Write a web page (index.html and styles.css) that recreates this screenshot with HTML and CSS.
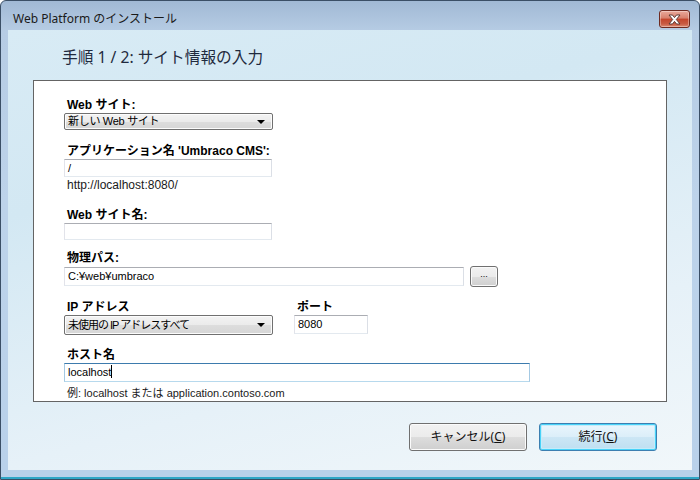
FILE: index.html
```html
<!DOCTYPE html>
<html lang="ja">
<head>
<meta charset="utf-8">
<title>Web Platform のインストール</title>
<link rel="stylesheet" href="styles.css">
</head>
<body>
<div class="window">
  <div class="titlebar">
    <span class="title">Web Platform のインストール</span>
    <div class="close">
      <svg width="15" height="11" viewBox="0 0 15 11">
        <path d="M2 1 L5.5 1 L7.5 3.6 L9.5 1 L13 1 L9.3 5.5 L13 10 L9.5 10 L7.5 7.4 L5.5 10 L2 10 L5.7 5.5 Z" fill="#ffffff" stroke="#5a3a36" stroke-width="1" stroke-linejoin="round"/>
      </svg>
    </div>
  </div>
  <div class="client">
    <h1 class="heading">手順 1 / 2: サイト情報の入力</h1>
    <div class="panel">
      <div class="label l1">Web サイト:</div>
      <div class="select sel-site"><span>新しい Web サイト</span><i class="arrow"></i></div>

      <div class="label l2">アプリケーション名 'Umbraco CMS':</div>
      <div class="input in-short">/</div>
      <div class="hint h1">http://localhost:8080/</div>

      <div class="label l3">Web サイト名:</div>
      <div class="input in-short"></div>

      <div class="label l4">物理パス:</div>
      <div class="row path-row">
        <div class="input in-path">C:¥web¥umbraco</div>
        <div class="browse">...</div>
      </div>

      <div class="row ip-row">
        <div class="col">
          <div class="label l5">IP アドレス</div>
          <div class="select sel-ip"><span>未使用の IP アドレスすべて</span><i class="arrow"></i></div>
        </div>
        <div class="col port-col">
          <div class="label l5">ポート</div>
          <div class="input in-port">8080</div>
        </div>
      </div>

      <div class="label l6">ホスト名</div>
      <div class="input in-host focus">localhost<span class="caret"></span></div>
      <div class="hint h2">例: localhost または application.contoso.com</div>
    </div>
    <div class="buttons">
      <div class="btn">キャンセル(<u>C</u>)</div>
      <div class="btn default">続行(<u>C</u>)</div>
    </div>
  </div>
</div>
</body>
</html>
```

FILE: styles.css
```css
* { box-sizing: border-box; }
html, body { margin: 0; padding: 0; }
body {
  width: 700px;
  height: 480px;
  overflow: hidden;
  background: #ffffff;
  font-family: "Liberation Sans", "Noto Sans CJK JP", sans-serif;
  font-size: 12px;
  color: #000;
}
.window {
  width: 700px;
  height: 480px;
  border: 1px solid #3b4f66;
  border-radius: 6px 6px 0 0;
  background: linear-gradient(to bottom, #a1b9d5 0px, #b6cce4 30px, #bdd3ea 200px, #b9d1ea 470px);
  display: flex;
  flex-direction: column;
  box-shadow: inset 0 -2px 0 #2fa6c6;
}
.titlebar {
  height: 29px;
  display: flex;
  align-items: flex-start;
  justify-content: space-between;
  padding: 0 9px 0 12px;
}
.title {
  margin-top: 11px;
  font-family: "Noto Sans", "Noto Sans CJK JP", sans-serif;
  font-size: 12px;
  line-height: 14px;
  color: #1a1a1a;
}
.close {
  margin-top: 9px;
  width: 31px;
  height: 18px;
  border: 1px solid #6e2a20;
  border-radius: 3px;
  background: linear-gradient(to bottom, #e9a99b 0%, #d7806c 45%, #c4452c 50%, #c85a42 80%, #dc8a72 100%);
  box-shadow: inset 0 0 0 1px rgba(255,255,255,0.35);
  display: flex;
  align-items: center;
  justify-content: center;
}
.client {
  margin: 0 7px;
  height: 440px;
  background: linear-gradient(165deg, #d8ebf5 0%, #d3e8f3 30%, #e6f1f8 70%, #f1f7fa 100%);
  display: flex;
  flex-direction: column;
}
.heading {
  margin: 17px 0 0 54px;
  height: 20px;
  font-family: "Noto Sans", "Noto Sans CJK JP", sans-serif;
  font-weight: normal;
  font-size: 15.7px;
  line-height: 20px;
  color: #1f2a3e;
}
.panel {
  margin: 13px 25px 0 25px;
  height: 322px;
  overflow: hidden;
  background: #fff;
  border: 1px solid #646464;
  padding: 17px 0 0 30px;
  display: flex;
  flex-direction: column;
  align-items: flex-start;
}
.label {
  height: 15px;
  line-height: 15px;
  font-weight: bold;
  padding-left: 3px;
  white-space: nowrap;
}
.l2 { margin-top: 14px; }
.l3 { margin-top: 15px; }
.l4 { margin-top: 11px; }
.l5 { margin-top: 0; }
.l6 { margin-top: 13px; }
.hint {
  height: 15px;
  line-height: 15px;
  padding-left: 3px;
  color: #1a1a1a;
  white-space: nowrap;
}
.h1 { margin-top: 1px; }
.h2 { margin-top: 4px; font-size: 11px; }
.select {
  width: 209px;
  height: 19px;
  border: 1px solid #707070;
  border-radius: 2px;
  background: linear-gradient(to bottom, #f3f3f3 0%, #ebebeb 50%, #dddddd 51%, #d6d6d6 100%);
  box-shadow: inset 0 0 0 1px #fcfcfc;
  display: flex;
  align-items: center;
  justify-content: space-between;
  padding: 0 7px 0 3px;
  font-size: 11px;
  line-height: 15px;
  white-space: nowrap;
}
.sel-site span { letter-spacing: -0.3px; }
.sel-ip span { letter-spacing: -1px; }
.arrow {
  width: 0;
  height: 0;
  border-left: 4px solid transparent;
  border-right: 4px solid transparent;
  border-top: 4px solid #000;
}
.sel-ip { height: 20px; }
.input {
  height: 18px;
  border: 1px solid #abadb3;
  border-left-color: #e2e3ea;
  border-right-color: #dbdfe6;
  border-bottom-color: #e3e9ef;
  background: #fff;
  padding: 0 3px;
  font-size: 11px;
  line-height: 16px;
  white-space: nowrap;
}
.in-short { width: 208px; }
.in-path { width: 400px; height: 19px; line-height: 17px; }
.in-port { width: 74px; height: 19px; line-height: 17px; }
.in-host { width: 466px; height: 19px; line-height: 17px; }
.input.focus {
  border-color: #3d7bad;
  border-left-color: #a4c9e3;
  border-right-color: #a4c9e3;
  border-bottom-color: #b7d9ed;
}
.caret {
  display: inline-block;
  width: 1px;
  height: 13px;
  background: #000;
  vertical-align: -2px;
}
.row { display: flex; }
.path-row {
  margin-top: 0;
  align-items: center;
  height: 21px;
  gap: 6px;
}
.browse {
  width: 28px;
  height: 21px;
  border: 1px solid #707070;
  border-radius: 3px;
  background: linear-gradient(to bottom, #f2f2f2 0%, #ebebeb 50%, #dddddd 51%, #cfcfcf 100%);
  box-shadow: inset 0 0 0 1px #fafafa;
  font-size: 9px;
  line-height: 15px;
  text-align: center;
}
.ip-row {
  margin-top: 13px;
  gap: 21px;
}
.col { display: flex; flex-direction: column; align-items: flex-start; }
.sel-ip { width: 209px; }
.buttons {
  margin: 21px 35px 0 0;
  display: flex;
  justify-content: flex-end;
  gap: 12px;
}
.btn {
  width: 118px;
  height: 28px;
  border: 1px solid #707070;
  border-radius: 3px;
  background: linear-gradient(to bottom, #f2f2f2 0%, #ebebeb 50%, #dddddd 51%, #cfcfcf 100%);
  box-shadow: inset 0 0 0 1px #fbfbfb;
  text-align: center;
  line-height: 26px;
  font-size: 12px;
  font-family: "Noto Sans", "Noto Sans CJK JP", sans-serif;
  color: #111;
}
.btn u { text-decoration: underline; text-underline-offset: 1px; }
.btn.default {
  border-color: #3c7fb1;
  box-shadow: inset 0 0 0 1px #48d2f8, inset 0 0 0 2px #c4ecfa;
  background: linear-gradient(to bottom, #eaf6fd 0%, #dbeef9 50%, #cce6f5 51%, #bedff1 100%);
}
```
